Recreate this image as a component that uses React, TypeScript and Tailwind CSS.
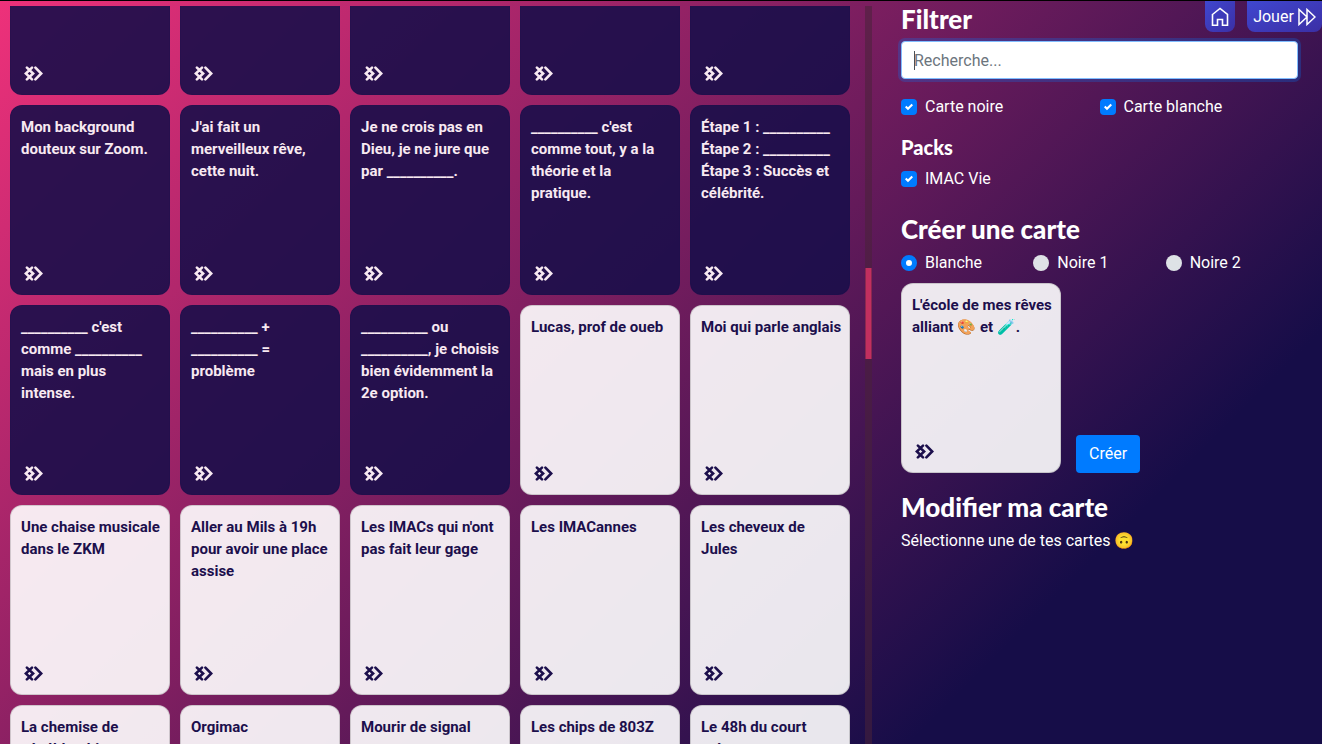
import { useRef, useEffect } from "react";

type Card = { text: string; dark?: boolean };

const dark = (text: string): Card => ({ text, dark: true });
const white = (text: string): Card => ({ text });

const cards: Card[] = [
  dark(""),
  dark(""),
  dark(""),
  dark(""),
  dark(""),
  dark("Mon background douteux sur Zoom."),
  dark("J'ai fait un merveilleux rêve, cette nuit."),
  dark("Je ne crois pas en Dieu, je ne jure que par __________."),
  dark("__________ c'est comme tout, y a la théorie et la pratique."),
  dark("Étape 1 : __________\nÉtape 2 : __________\nÉtape 3 : Succès et célébrité."),
  dark("__________ c'est comme __________ mais en plus intense."),
  dark("__________ + __________ = problème"),
  dark("__________ ou __________, je choisis bien évidemment la 2e option."),
  white("Lucas, prof de oueb"),
  white("Moi qui parle anglais"),
  white("Une chaise musicale dans le ZKM"),
  white("Aller au Mils à 19h pour avoir une place assise"),
  white("Les IMACs qui n'ont pas fait leur gage"),
  white("Les IMACannes"),
  white("Les cheveux de Jules"),
  white("La chemise de\nvénéblerchie"),
  white("Orgimac"),
  white("Mourir de signal"),
  white("Les chips de 803Z"),
  white("Le 48h du court\nmétrage"),
];

function Mark() {
  return (
    <svg viewBox="0 0 19 15" className="ml-[3px] h-[15px] w-[19px]" fill="none" stroke="currentColor" strokeWidth="2.6" strokeLinecap="round" aria-hidden="true">
      <path d="M8 1.6 1.8 7.5 8 13.4M2.9 1.6 9.1 7.5 2.9 13.4" />
      <path d="M11.4 1.6 17.2 7.5 11.4 13.4" />
    </svg>
  );
}

function CardView({ card }: { card: Card }) {
  const tone = card.dark
    ? "border-[#1b0e4b]/20 bg-[#1a0e4a]/90 text-[#f8e9f1]"
    : "border-black/15 bg-white/90 text-[#1c0f4c]";
  return (
    <article className={`flex h-[190px] w-40 shrink-0 flex-col justify-between rounded-xl border pt-2.5 pr-1.5 pb-[13px] pl-2.5 ${tone}`}>
      <p className="text-[15px]/[22px] font-bold whitespace-pre-line">{card.text}</p>
      <Mark />
    </article>
  );
}

function Check({ label }: { label: string }) {
  return (
    <label className="flex flex-1 items-center gap-2">
      <span className="relative flex size-4">
        <input type="checkbox" defaultChecked className="size-4 appearance-none rounded bg-[#dee2e6] checked:bg-[#007bff]" />
        <svg viewBox="0 0 8 8" className="pointer-events-none absolute top-1 left-1 size-2" fill="#fff" aria-hidden="true">
          <path d="M6.564.75l-3.59 3.612-1.538-1.55L0 4.26 2.974 7.25 8 2.193z" />
        </svg>
      </span>
      {label}
    </label>
  );
}

function Radio({ label, checked }: { label: string; checked?: boolean }) {
  return (
    <label className="flex flex-1 items-center gap-2">
      <input
        type="radio"
        name="type"
        defaultChecked={checked}
        className="size-4 appearance-none rounded-full bg-[#dee2e6] checked:border-5 checked:border-[#007bff] checked:bg-white"
      />
      {label}
    </label>
  );
}

const heading = "font-['Lato',sans-serif] font-black";

export default function App() {
  const search = useRef<HTMLInputElement>(null);
  useEffect(() => search.current?.focus(), []);
  return (
    <div className="flex h-screen overflow-hidden border-t border-black bg-[linear-gradient(135deg,#ee317a_0%,#160d48_80%)] font-['Roboto',sans-serif] text-base text-white">
      <main className="mt-[5px] flex min-w-0 flex-1 overflow-hidden pl-2.5">
        <div className="-mt-[101px] flex flex-1 flex-wrap content-start gap-2.5">
          {cards.map((card, i) => (
            <CardView key={i} card={card} />
          ))}
        </div>
        <div className="flex w-[7px] flex-col bg-[#492338]/55 pt-[262px]" aria-hidden="true">
          <div className="h-[91px] border-x border-[#8a2850] bg-[#c22f5f]" />
        </div>
      </main>

      <aside className="w-[450px] shrink-0 pr-6 pl-[29px]">
        <div className="-mr-6 flex items-start justify-between">
          <h2 className={`${heading} pt-1 text-[26px]/7`}>Filtrer</h2>
          <nav className="flex gap-3">
            <a href="#accueil" aria-label="Accueil" className="flex h-[31px] w-[30px] items-center justify-center rounded-b-lg bg-linear-to-br from-[#3f47d0] to-[#3b2fa5]">
              <svg viewBox="0 0 18 20" className="h-5 w-[18px]" fill="none" stroke="currentColor" strokeWidth="1.6" aria-hidden="true">
                <path d="M1.5 7.5 9 1.5 16.5 7.5V18.2H11.5V12.5H6.5V18.2H1.5Z" />
              </svg>
            </a>
            <a href="#jouer" className="flex h-[31px] w-[75px] items-center justify-center gap-1 rounded-b-lg bg-linear-to-br from-[#3f47d0] to-[#3b2fa5]">
              Jouer
              <svg viewBox="0 0 18 18" className="size-[18px]" fill="none" stroke="currentColor" strokeWidth="1.5" aria-hidden="true">
                <path d="M1 1.5V16.5L9 9ZM9 1.5V16.5L17 9Z" />
              </svg>
            </a>
          </nav>
        </div>

        <div className="relative mt-2">
          <input
            ref={search}
            type="text"
            aria-label="Recherche"
            placeholder="Recherche..."
            className="peer block h-[38px] w-full rounded border border-[#80bdff] bg-white px-3 text-[#495057] caret-transparent ring-3 ring-[#007bff]/25 outline-none placeholder:text-[#6c757d]"
          />
          <span className="pointer-events-none absolute top-2.5 left-[13px] hidden h-[19px] w-px bg-[#495057] peer-placeholder-shown:block" aria-hidden="true" />
        </div>

        <div className="mt-4 flex">
          <Check label="Carte noire" />
          <Check label="Carte blanche" />
        </div>

        <h3 className={`${heading} mt-4 text-xl/6`}>Packs</h3>
        <div className="mt-2 flex">
          <Check label="IMAC Vie" />
        </div>

        <h2 className={`${heading} mt-6 text-[26px]/7`}>Créer une carte</h2>
        <div className="mt-2 flex">
          <Radio label="Blanche" checked />
          <Radio label="Noire 1" />
          <Radio label="Noire 2" />
        </div>
        <div className="mt-2 flex items-end gap-[15px]">
          <CardView card={white("L'école de mes rêves alliant 🎨 et 🧪.")} />
          <button type="button" className="h-[38px] rounded bg-[#007bff] px-[13px]">
            Créer
          </button>
        </div>

        <h2 className={`${heading} mt-5 text-[26px]/7`}>Modifier ma carte</h2>
        <p className="mt-2">Sélectionne une de tes cartes 🙃</p>
      </aside>
    </div>
  );
}
